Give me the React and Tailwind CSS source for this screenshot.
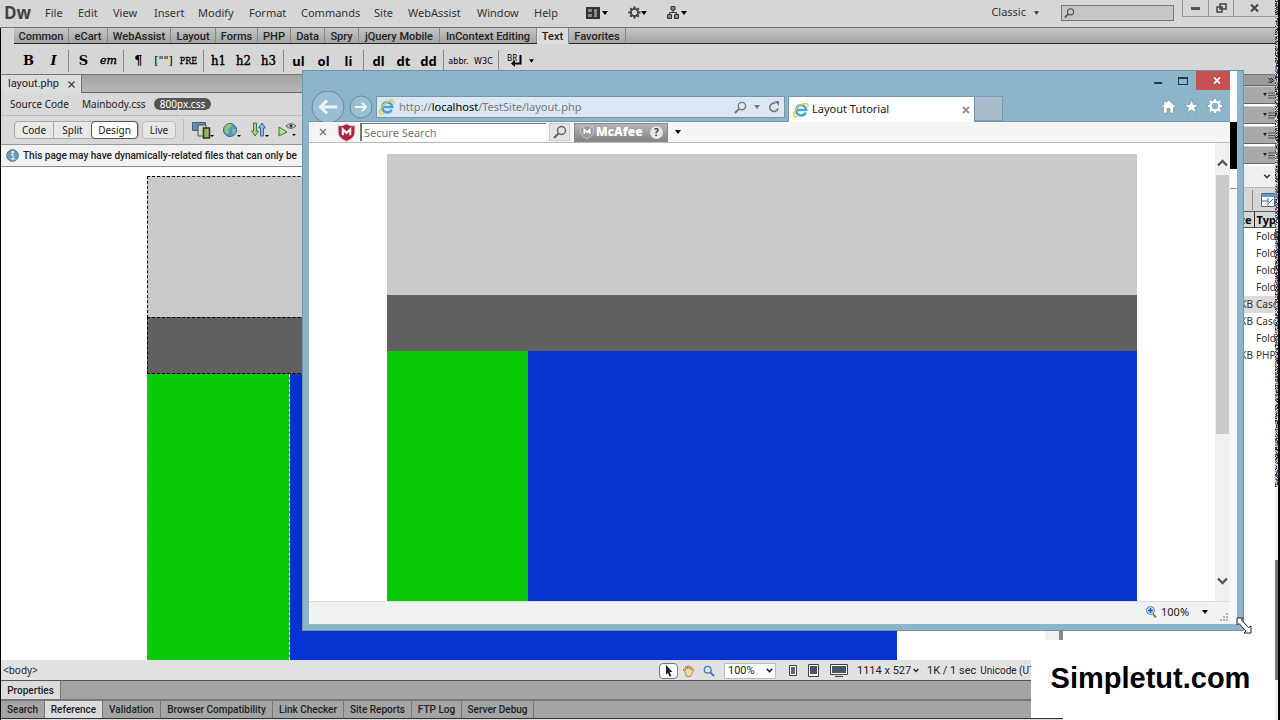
import React from 'react';

const menus = [
  { label: 'File', w: 'w-[33px]' },
  { label: 'Edit', w: 'w-[35px]' },
  { label: 'View', w: 'w-[41px]' },
  { label: 'Insert', w: 'w-[44px]' },
  { label: 'Modify', w: 'w-[51px]' },
  { label: 'Format', w: 'w-[52px]' },
  { label: 'Commands', w: 'w-[73px]' },
  { label: 'Site', w: 'w-[34px]' },
  { label: 'WebAssist', w: 'w-[69px]' },
  { label: 'Window', w: 'w-[57px]' },
  { label: 'Help', w: 'w-[40px]' },
];

const categories = [
  { label: 'Common', w: 'w-[55px]' },
  { label: 'eCart', w: 'w-[39px]' },
  { label: 'WebAssist', w: 'w-[63px]' },
  { label: 'Layout', w: 'w-[45px]' },
  { label: 'Forms', w: 'w-[42px]' },
  { label: 'PHP', w: 'w-[33px]' },
  { label: 'Data', w: 'w-[34px]' },
  { label: 'Spry', w: 'w-[34px]' },
  { label: 'jQuery Mobile', w: 'w-[81px]' },
  { label: 'InContext Editing', w: 'w-[97px]' },
  { label: 'Text', w: 'w-[32px]', active: true },
  { label: 'Favorites', w: 'w-[57px]' },
];

const serif = "font-['DejaVu_Serif',serif] font-bold text-[13px]";
const heading = "font-['DejaVu_Serif_Condensed','DejaVu_Serif',serif] font-medium text-[13px] [-webkit-text-stroke:0.4px_black]";
const sans = "font-['Noto_Sans',sans-serif] font-bold text-[13px]";
const tiny = "font-['DejaVu_Sans_Condensed',sans-serif] text-[9px]";

const insertGroups = [
  [{ label: 'B', style: serif }, { label: 'I', style: serif + ' italic' }],
  [{ label: 'S', style: serif }, { label: 'em', style: "font-['DejaVu_Serif',serif] italic text-[11px] [-webkit-text-stroke:0.4px_black]" }],
  [{ label: '¶', style: serif }, { label: '[""]', style: "font-['DejaVu_Serif',serif] text-[11px]" }, { label: 'PRE', style: "font-['DejaVu_Serif_Condensed','DejaVu_Serif',serif] text-[9px] [-webkit-text-stroke:0.3px_black]" }],
  [{ label: 'h1', style: heading }, { label: 'h2', style: heading }, { label: 'h3', style: heading }],
  [{ label: 'ul', style: sans }, { label: 'ol', style: sans }, { label: 'li', style: sans }],
  [{ label: 'dl', style: sans }, { label: 'dt', style: sans }, { label: 'dd', style: sans }],
  [{ label: 'abbr.', style: tiny }, { label: 'W3C', style: tiny }],
];

const bottomTabs = [
  { label: 'Search', w: 'w-11' },
  { label: 'Reference', w: 'w-[58px]', active: true },
  { label: 'Validation', w: 'w-[58px]' },
  { label: 'Browser Compatibility', w: 'w-28' },
  { label: 'Link Checker', w: 'w-[71px]' },
  { label: 'Site Reports', w: 'w-[68px]' },
  { label: 'FTP Log', w: 'w-[50px]' },
  { label: 'Server Debug', w: 'w-[72px]' },
];

const files = [
  { size: '', type: 'Folder' },
  { size: '', type: 'Folder' },
  { size: '', type: 'Folder' },
  { size: '', type: 'Folder' },
  { size: '1KB', type: 'Cascading', selected: true },
  { size: '1KB', type: 'Cascading' },
  { size: '', type: 'Folder' },
  { size: '1KB', type: 'PHP' },
];

const Caret = ({ className = '' }) => (
  <svg width="6" height="4" viewBox="0 0 6 4" className={`shrink-0 ${className}`}>
    <path d="M0 0h6L3 4z" fill="currentColor" />
  </svg>
);

const Chevron = ({ className = '' }) => (
  <svg width="7" height="5" viewBox="0 0 7 5" className={`shrink-0 ${className}`}>
    <path d="M.7.7l2.8 3 2.8-3" fill="none" stroke="currentColor" strokeWidth="1.6" />
  </svg>
);

const Gear = ({ size, fill, stroke = 'none' }) => (
  <svg width={size} height={size} viewBox="0 0 16 16">
    <g fill={fill} stroke={stroke} strokeWidth=".5">
      {[0, 45, 90, 135, 180, 225, 270, 315].map((a) => (
        <rect key={a} x="6.7" y="0.5" width="2.6" height="4" transform={`rotate(${a} 8 8)`} />
      ))}
    </g>
    <circle cx="8" cy="8" r="4.4" fill="none" stroke={fill} strokeWidth="2.2" />
  </svg>
);

const Magnifier = ({ size = 14, color = '#555', flip = false, fill = 'none' }) => (
  <svg width={size} height={size} viewBox="0 0 14 14" className={flip ? '-scale-x-100' : ''}>
    <path d="M8.5 8.5L13 13" stroke={color} strokeWidth="2.2" />
    <circle cx="5.5" cy="5.5" r="4" fill={fill} stroke={color} strokeWidth="1.5" />
  </svg>
);

const IeLogo = () => (
  <svg width="16" height="16" viewBox="0 0 16 16" className="shrink-0">
    <path d="M12.8 10.6A5.1 5.1 0 1 1 13.3 8H4.5" fill="none" stroke="#4aa5df" strokeWidth="2.6" />
    <path d="M14.8 4.6C15.4 1.5 13 .4 8.6 2.7 3.4 5.5.2 11.2 1.1 14c.5 1.3 2.2 1 3.7.2" fill="none" stroke="#e5cd2e" strokeWidth="1.5" />
  </svg>
);

const Grip = ({ className }) => (
  <div className={`w-[5px] shrink-0 bg-[radial-gradient(#888_35%,transparent_40%)] bg-[length:2px_2px] ${className}`} />
);

const MenuBar = () => (
  <header className="flex h-7 shrink-0 items-center border-b border-[#777] bg-[#d6d6d6] pb-0.5 text-[11px] text-[#333]">
    <span className="w-[45px] pl-1 font-['Open_Sans',sans-serif] text-[17px] leading-6 font-bold text-[#444]">Dw</span>
    <nav className="flex">
      {menus.map((m) => (
        <button key={m.label} className={`text-left leading-6 ${m.w}`}>{m.label}</button>
      ))}
    </nav>
    <div className="ml-3 flex items-center gap-5 text-black">
      <button className="flex items-center gap-0.5" aria-label="Layout">
        <svg width="14" height="12" viewBox="0 0 14 12">
          <path fill="#333" d="M0 0h14v12H0z" />
          <path fill="#8a8a8a" d="M2 2h4v3H2zM2 7h4v3H2zM8 2h3v8H8z" />
        </svg>
        <Caret />
      </button>
      <button className="flex items-center" aria-label="Extend"><Gear size={13} fill="#444" /><Caret /></button>
      <button className="flex items-center gap-0.5" aria-label="Site">
        <svg width="12" height="13" viewBox="0 0 12 13" fill="#888" stroke="#333">
          <path d="M4 .5h4v3.500H4zM.5 8.500h4v4h-4zM7.500 8.500h4v4h-4z" />
          <path d="M6 4v2.500M2.500 8.500v-2h7v2" fill="none" />
        </svg>
        <Caret />
      </button>
    </div>
    <button className="mr-[22px] ml-auto flex items-center gap-2"><span>Classic</span><Caret className="w-[5px]" /></button>
    <label className="flex h-4 w-[113px] items-center border border-[#777] bg-[#c6c6c6] pl-0.5">
      <Magnifier size={12} flip />
      <input aria-label="Search help" className="w-full min-w-0 bg-transparent outline-none" />
    </label>
    <div className="mb-2 ml-2 flex h-[17px] w-[93px] items-center border-b border-l border-[#999] text-[#444]">
      <button aria-label="Minimize" className="flex h-full w-[26px] items-center justify-center border-r border-[#999]"><span className="h-[3px] w-[9px] bg-[#555]" /></button>
      <button aria-label="Restore" className="flex h-full w-[25px] items-center justify-center border-r border-[#999]">
        <svg width="11" height="10" viewBox="0 0 11 10" fill="none" stroke="#444" strokeWidth="1.5"><path d="M4 1h6v5H4zM1 4h5v5H1z" /></svg>
      </button>
      <button aria-label="Close" className="flex h-full flex-1 items-center justify-center">
        <svg width="9" height="8" viewBox="0 0 9 8"><path d="M1 .5l7 7M8 .5l-7 7" stroke="#444" strokeWidth="2" /></svg>
      </button>
    </div>
  </header>
);

const InsertBar = () => (
  <section className="flex h-[47px] shrink-0 border-b border-[#777] bg-[#d6d6d6]">
    <div className="flex w-[13px] justify-center"><Grip className="mt-3 h-5" /></div>
    <div className="flex flex-1 flex-col">
      <div className="flex h-4 border-b border-[#222] bg-linear-to-b from-[#c4c4c4] to-[#a4a4a4] font-['Roboto',sans-serif] font-medium text-[#222]">
        {categories.map((c) => (
          <button key={c.label} className={`border-r border-[#888] text-center text-[11px] leading-[18px] whitespace-nowrap ${c.w} ${c.active ? '-mb-px bg-[#dcdcdc]' : ''}`}>
            {c.label}
          </button>
        ))}
      </div>
      <div className="flex flex-1 items-center pt-[3px] pl-0.5 text-black">
        {insertGroups.map((group, i) => (
          <div key={i} className="flex items-center">
            {group.map((b) => (
              <button key={b.label} className={`w-[25px] text-center leading-6 ${b.style}`}>{b.label}</button>
            ))}
            <span className="mx-0.5 h-[22px] w-px bg-[#888]" />
          </div>
        ))}
        <button aria-label="Line break" className="ml-1.5 flex items-center gap-1.5">
          <svg width="16" height="15" viewBox="0 0 16 15" fill="none" stroke="#000">
            <text x="0" y="8" fontSize="8" fill="#000" stroke="none">BR</text>
            <path d="M13.500 2v8.500H6" strokeWidth="2" /><path d="M8 7v7l-4-3.500z" fill="#000" stroke="none" />
          </svg>
          <Caret className="w-[5px]" />
        </button>
      </div>
    </div>
  </section>
);

const DocumentHeader = () => (
  <>
    <div className="flex h-[18px] shrink-0 border-b border-[#666] bg-linear-to-b from-[#a2a2a2] to-[#b8b8b8]">
      <div className="-mb-px flex w-[81px] items-center justify-between border-r border-[#777] bg-[#dcdcdc] pr-1.5 pl-[7px] text-[11px] leading-4">
        <span className="font-['Roboto',sans-serif]">layout.php</span>
        <button aria-label="Close layout.php">
          <svg width="7" height="7" viewBox="0 0 7 7"><path d="M.5.5l6 6M6.500.5l-6 6" stroke="#444" strokeWidth="1.300" /></svg>
        </button>
      </div>
    </div>
    <div className="flex h-[23px] shrink-0 items-center border-b border-[#bbb] bg-[#d8d8d8] pl-[9px] text-[10px]">
      <a href="#source" className="w-[72px]">Source Code</a>
      <a href="#mainbody" className="w-[72px]">Mainbody.css</a>
      <a href="#800px" className="w-[57px] rounded-full bg-[#555] text-center leading-3 text-white">800px.css</a>
    </div>
    <div className="flex h-[29px] shrink-0 items-center border-b border-[#999] bg-[#d8d8d8] pl-1 text-[10px]">
      <Grip className="mr-1 h-[18px]" />
      <div className="flex h-[18px] rounded border border-[#aaa] bg-[#e8e8e8]">
        <button className="w-[39px] border-r border-[#aaa]">Code</button>
        <button className="w-[37px]">Split</button>
        <button className="-my-px w-[47px] rounded-sm border border-[#555] bg-white">Design</button>
      </div>
      <button className="ml-[3px] h-[18px] w-[34px] rounded border border-[#bbb] bg-[#e6e6e6]">Live</button>
      <span className="mr-2 ml-[7px] h-[22px] w-px bg-[#bbb]" />
      <div className="flex items-center gap-2">
        <button aria-label="Multiscreen">
          <svg width="22" height="17" viewBox="0 0 22 17">
            <path d="M.5.5h13v8H.5z" fill="#6a87ba" stroke="#496083" />
            <path d="M6 3h8v11H6z" fill="#cfd8c4" stroke="#4b5640" />
            <path d="M11.500 6h6v10h-6z" fill="#94b55d" stroke="#333" strokeWidth="1.500" />
            <path d="M18 13h4l-2 2z" />
          </svg>
        </button>
        <button aria-label="Preview">
          <svg width="20" height="17" viewBox="0 0 20 17">
            <circle cx="8" cy="8" r="6.500" fill="#4b9cd0" stroke="#2d6796" />
            <path d="M3 4c3-3 6-2 7-1L8 6 6 7l1 3-2 2C2 10 2 7 3 4zM10 7l4 0-1 4-2 1z" fill="#8fc56c" />
            <path d="M15 13h4l-2 2z" />
          </svg>
        </button>
        <button aria-label="File management">
          <svg width="20" height="17" viewBox="0 0 20 17">
            <path d="M3.500 1h3v8h2L5 14 1.500 9h2z" fill="#a9d08b" stroke="#3f7a34" />
            <path d="M10.500 14h3V6h2L12 1 8.500 6h2z" fill="#8fbbe0" stroke="#35689c" />
            <path d="M15 13h4l-2 2z" />
          </svg>
        </button>
        <button aria-label="Validate">
          <svg width="20" height="17" viewBox="0 0 20 17">
            <path d="M1 5l8 5-8 4z" fill="#b7dba0" stroke="#3f7a34" />
            <path d="M8 4c3-3 7-3 10 0-3 3-7 3-10 0z" fill="#ccc" stroke="#555" />
            <circle cx="13" cy="4" r="1.500" fill="#333" /><path d="M14 12h4l-2 2z" />
          </svg>
        </button>
      </div>
    </div>
    <div className="flex h-[22px] shrink-0 items-center gap-1 border-b border-[#888] bg-[#f2f2f2] pl-[5px] font-['Roboto',sans-serif] text-[10px] font-medium whitespace-nowrap text-[#222]">
      <svg width="13" height="13" viewBox="0 0 13 13">
        <circle cx="6.500" cy="6.500" r="5.800" fill="#6f9cbd" stroke="#4b7390" />
        <path d="M5 5.500h2V10M5 10h4M6 2.500h1.500V4H6z" stroke="#fff" fill="none" />
      </svg>
      This page may have dynamically-related files that can only be
    </div>
  </>
);

const DesignView = () => (
  <div className="flex min-h-0 flex-1 overflow-hidden bg-white">
    <div className="mt-[9px] ml-[146px] flex w-[750px] flex-col">
      <div className="h-[142px] border border-dashed border-black bg-[#cacaca]" />
      <div className="-mt-px h-[57px] border border-dashed border-black bg-[#606060]" />
      <div className="flex flex-1">
        <div className="w-[143px] border-r border-l border-dashed border-r-white border-l-[#7a9a2a] bg-[#09c909]" />
        <div className="flex-1 border-t border-[#203a9a] bg-[#0433cf]" />
      </div>
    </div>
    <div className="ml-auto w-[18px] border-r-4 border-[#888] bg-[#f0f0f0]" />
  </div>
);

const StatusBar = () => (
  <footer className="flex h-5 shrink-0 items-center border-t border-[#ddd] bg-[#e2e2e2] text-[11px] whitespace-nowrap text-[#222]">
    <button className="pl-0.5 text-[10px]">&lt;body&gt;</button>
    <div className="ml-auto flex w-[404px] items-center font-['Roboto',sans-serif] leading-4">
      <button aria-label="Select tool" className="flex h-4 w-[19px] items-center justify-center rounded-sm border border-[#777] bg-white">
        <svg width="8" height="12" viewBox="0 0 8 12"><path d="M1 0l6.500 7H4.700l1.700 4-1.700.8L3 7.800 1 9.800z" fill="#222" /></svg>
      </button>
      <button aria-label="Hand tool" className="ml-1">
        <svg width="13" height="12" viewBox="0 0 13 12"><path d="M3 7L1 5l1-1 2 1.500L3 2l1-.5L5.500 4V1h1.300l.4 3L8.500 1.500l1 .5-.5 3 2-1.500.8.8L10 9l-1.500 2.500h-4z" fill="#f3d6a5" stroke="#a97f42" strokeWidth=".9" /></svg>
      </button>
      <button aria-label="Zoom tool" className="ml-2"><Magnifier size={12} color="#5272b8" fill="#dde8f8" /></button>
      <select aria-label="Magnification" className="ml-[9px] h-4 w-[52px] shrink-0 appearance-none border border-[#bbb] bg-white pl-[3px] leading-3" defaultValue="100%">
        <option>100%</option>
      </select>
      <Chevron className="-ml-[10px]" />
      <svg width="62" height="15" viewBox="0 0 62 15" className="ml-3.5 shrink-0" stroke="#444">
        <path d="M3.500 3.500h5v8h-5z" fill="#666" stroke="#fff" /><path d="M2.500 2.500h7v10h-7z" fill="none" />
        <path d="M21.500 1.500h10v12h-10z" fill="#fff" /><path d="M23 3h7v8h-7z" fill="#46546b" stroke="none" />
        <path d="M43.500 1.500h17v10h-17z" fill="#fff" /><path d="M45 3h14v7H45z" fill="#46546b" stroke="none" /><path d="M48 13.500h8" />
      </svg>
      <span className="ml-2 w-14 shrink-0">1114 x 527</span>
      <Chevron className="mr-2 w-1.5" />
      <span className="mr-1 shrink-0">1K / 1 sec</span>
      <span className="text-[10px]">Unicode (UTF-8)</span>
    </div>
  </footer>
);

const BottomPanels = () => (
  <section className="shrink-0 font-['Roboto',sans-serif] font-medium text-[#222]">
    <div className="flex h-[19px] border-t border-[#555] bg-[#a4a4a4]">
      <button className="w-[60px] border-r border-[#777] bg-[#dcdcdc] text-[10px]">Properties</button>
    </div>
    <div className="flex h-[19px] border-t-2 border-[#777] bg-[#a4a4a4] text-[10px]">
      {bottomTabs.map((t) => (
        <button key={t.label} className={`border-r border-[#777] whitespace-nowrap ${t.w} ${t.active ? 'bg-[#dcdcdc]' : ''}`}>{t.label}</button>
      ))}
    </div>
    <div className="h-0.5 border-t border-[#333] bg-[#ddd]" />
  </section>
);

const SidePanels = () => (
  <aside className="flex w-[212px] shrink-0 flex-col overflow-hidden bg-white text-[10px] text-[#333]">
    <div className="flex h-[11px] items-center justify-end border-b border-[#666] bg-[#9b9b9b] pr-px">
      <svg width="6" height="5" viewBox="0 0 6 5"><path d="M.5 0L3 2.500.5 5M3 0l2.500 2.500L3 5" fill="none" stroke="#000" /></svg>
    </div>
    {[0, 1, 2, 3].map((n) => (
      <div key={n} className="mb-0.5 flex h-[18px] items-center justify-end border-t border-b border-t-[#ccc] border-b-[#666] bg-[#a9a9a9]">
        <svg width="12" height="7" viewBox="0 0 12 7"><path d="M0 1h4L2 4z" fill="#222" /><path d="M5 1h7M5 3.500h7M5 6h7" stroke="#555" /></svg>
      </div>
    ))}
    <div className="flex h-[22px] items-center justify-end border-b border-[#bbb] bg-[#efefef] pr-1"><Chevron className="w-2" /></div>
    <div className="flex h-[23px] shrink-0 items-center justify-end bg-[#d6d6d6]">
      <span className="mr-2 h-5 w-px bg-[#888]" />
      <svg width="14" height="14" viewBox="0 0 14 14"><path d="M.5.5h13v13H.5z" fill="#fff" stroke="#567" /><path d="M1 1h13v3H1z" fill="#5e9bc8" /><path d="M7 5v8M1 8h6M8 10l4-4" stroke="#468" /></svg>
    </div>
    <table className="w-full table-fixed border-collapse whitespace-nowrap">
      <thead>
        <tr className="h-4 border-y border-[#555] bg-[#d6d6d6] text-[11px] leading-3 text-black">
          <th className="w-[191px] border-r border-[#333] p-0 pr-0.5 text-right">Size</th>
          <th className="overflow-hidden p-0 pl-0.5 text-left">Type</th>
        </tr>
      </thead>
      <tbody>
        {files.map((f, i) => (
          <tr key={i} className={`h-[17px] leading-3 ${f.selected ? 'bg-[#dadada]' : ''}`}>
            <td className="p-0 pr-px text-right">{f.size}</td>
            <td className="overflow-hidden p-0 pl-0.5">{f.type}</td>
          </tr>
        ))}
      </tbody>
    </table>
  </aside>
);

const noiseColors = ['#3b2f52', '#c9d8c4', '#6e86a8', '#1d1d24', '#a77fb5', '#e8e8ee', '#4f7a52', '#8c8ca0', '#283a6b', '#d4c39a', '#5b4a7c'];

// Screen capture static along the right edge
const EdgeStatic = () => (
  <div className="flex w-[5px] shrink-0 border-r-2 border-black bg-[#eee]">
    <div className="flex w-[3px] flex-col">
      <svg className="h-[487px] w-full shrink-0" shapeRendering="crispEdges">
        {Array.from({ length: 1461 }, (_, i) => (
          <rect key={i} x={i % 3} y={Math.floor(i / 3)} width="1" height="1" fill={noiseColors[Math.floor(Math.abs(Math.sin(i * 12.9898) * 43758.5453)) % 11]} />
        ))}
      </svg>
      <div className="mt-[73px] h-[120px] bg-[#777]" />
    </div>
  </div>
);

const Shield = ({ fill, letter, size = 18 }) => (
  <svg width={size} height={size} viewBox="0 0 18 18" className="shrink-0">
    <path d="M1 2.500C4 3 7 2 9 .7 11 2 14 3 17 2.500V9c0 4-4 7-8 8.500C5 16 1 13 1 9z" fill={fill} stroke="#d5d5d5" />
    <path d="M5.500 11.500V6L9 9.500 12.500 6v5.500" fill="none" stroke={letter} strokeWidth="2" />
  </svg>
);

const BrowserToolbar = () => (
  <>
    <div className="flex h-[25px] shrink-0 items-start">
      <div className="ml-auto flex h-[19px] items-center">
        <button aria-label="Minimize window" className="mt-1 mr-4 h-0.5 w-2 bg-[#1f3d4c]" />
        <button aria-label="Maximize window" className="mr-2 h-2 w-2.5 border border-t-2 border-[#1f3d4c]" />
        <button aria-label="Close window" className="flex h-[19px] w-[34px] items-center justify-center bg-[#c75050] pl-2">
          <svg width="8" height="7" viewBox="0 0 8 7"><path d="M1 .3l6 6.400M7 .3L1 6.700" stroke="#fff" strokeWidth="1.700" /></svg>
        </button>
      </div>
    </div>
    <div className="flex h-[26px] shrink-0 items-end border-b border-[#7798a8] text-[11px]">
      <button aria-label="Back" className="-mb-1 ml-0.5 shrink-0">
        <svg width="34" height="34" viewBox="0 0 34 34"><circle cx="17" cy="16" r="16" fill="#98bfd2" stroke="#668a9c" /><path d="M26 16H10M16 9.500L9.500 16l6.500 6.500" fill="none" stroke="#edf5f9" strokeWidth="3" /></svg>
      </button>
      <button aria-label="Forward" className="mb-0.5 ml-1 shrink-0">
        <svg width="24" height="24" viewBox="0 0 24 24"><circle cx="12" cy="12" r="11" fill="#98bfd2" stroke="#668a9c" /><path d="M6 12h11M13 8l4 4-4 4" fill="none" stroke="#edf5f9" strokeWidth="2" /></svg>
      </button>
      <div className="mb-[3px] ml-[3px] flex h-[22px] w-[409px] items-center border border-[#7596a6] bg-[#dbe8f3] pr-1 pl-0.5 text-[#777]">
        <IeLogo />
        <span className="ml-1">http://<span className="text-black">localhost</span>/TestSite/layout.php</span>
        <button aria-label="Search" className="mr-[7px] ml-auto"><Magnifier size={13} color="#777" flip /></button>
        <Caret className="mr-2" />
        <button aria-label="Refresh">
          <svg width="12" height="12" viewBox="0 0 12 12"><path d="M10 7.500A4.200 4.200 0 1 1 7.500 2.300" fill="none" stroke="#777" strokeWidth="1.700" /><path d="M6.500 0H11v5z" fill="#777" /></svg>
        </button>
      </div>
      <div className="-mb-px ml-[3px] flex h-[26px] w-[187px] items-center gap-[3px] border border-b-0 border-[#7596a6] bg-white pr-1 pl-1 text-[#222]">
        <IeLogo />
        <span>Layout Tutorial</span>
        <button aria-label="Close tab" className="ml-auto">
          <svg width="8" height="8" viewBox="0 0 8 8"><path d="M1 1l6 6M7 1L1 7" stroke="#999" strokeWidth="2" /></svg>
        </button>
      </div>
      <button aria-label="New tab" className="h-[25px] w-7 border border-l-0 border-[#7e9aae] bg-[#a9bccd]" />
      <div className="mr-[7px] mb-[7px] ml-auto flex items-center gap-2">
        <button aria-label="Home">
          <svg width="15" height="15" viewBox="0 0 15 15"><path d="M7.500 1l6.800 6.500-1 1L12.500 8v6H9V9.500H6V14H2.500V8l-.8.5-1-1L3 5.200V2h2v1.400z" fill="#fff" stroke="#6b8896" strokeWidth=".6" /></svg>
        </button>
        <button aria-label="Favorites">
          <svg width="15" height="15" viewBox="0 0 15 15"><path d="M7.500.5l1.900 4.900 5.100.2-4 3.200 1.400 5-4.400-2.900-4.400 2.900 1.400-5-4-3.200 5.100-.2z" fill="#fff" stroke="#6b8896" strokeWidth=".6" /></svg>
        </button>
        <button aria-label="Tools"><Gear size={16} fill="#fff" stroke="#6b8896" /></button>
      </div>
    </div>
    <div className="flex h-[21px] shrink-0 items-center border-b border-[#bbb] bg-[#f5f5f6] text-[11px]">
      <button aria-label="Close toolbar" className="ml-2.5">
        <svg width="8" height="8" viewBox="0 0 8 8"><path d="M1 1l6 6M7 1L1 7" stroke="#777" strokeWidth="1.400" /></svg>
      </button>
      <div className="ml-2.5"><Shield fill="#b5203c" letter="#fff" size={19} /></div>
      <input aria-label="Secure Search" placeholder="Secure Search" className="ml-1 h-[18px] w-[186px] border-t border-l-2 border-[#777] bg-white pb-px pl-0.5 outline-none placeholder:text-[#777]" />
      <button aria-label="Run search" className="ml-[3px] flex h-[18px] w-[21px] items-center justify-center border border-[#ccc] bg-[#e4e4e4]"><Magnifier size={14} color="#666" flip /></button>
      <div className="ml-1 flex h-[19px] w-[94px] items-center border border-[#888] bg-linear-to-b from-[#b5b5b5] to-[#858585] pr-1 pl-[5px]">
        <Shield fill="#999" letter="#fff" size={14} />
        <span className="ml-0.5 font-['Open_Sans',sans-serif] text-[12px] leading-4 font-extrabold text-white">McAfee</span>
        <button aria-label="Help" className="ml-auto h-[13px] w-[13px] rounded-full bg-[#e5e5e5] text-center text-[10px] leading-[13px] font-bold text-[#444]">?</button>
      </div>
      <button aria-label="Toolbar menu" className="ml-[7px]"><Caret /></button>
    </div>
  </>
);

const BrowserWindow = () => (
  <div className="absolute top-[70px] right-9 bottom-[89px] left-[302px] flex border border-[#6d94a7] bg-[#8db5ca] pr-1.5 pb-1.5 pl-1.5">
    <div className="flex min-w-0 flex-1 flex-col">
      <BrowserToolbar />
      <div className="flex min-h-0 flex-1 bg-white">
        <div className="mx-auto mt-[11px] flex w-[750px] flex-col">
          <div className="h-[141px] bg-[#cacaca]" />
          <div className="h-14 bg-[#606060]" />
          <div className="flex flex-1">
            <div className="w-[141px] bg-[#09c909]" />
            <div className="flex-1 bg-[#0433cf]" />
          </div>
        </div>
        <div className="flex w-[15px] flex-col items-center bg-[#f0f0f0] text-[#555]">
          <svg width="11" height="8" viewBox="0 0 11 8" className="mt-4 mb-2 shrink-0"><path d="M1 6.500l4.500-4.500L10 6.500" fill="none" stroke="currentColor" strokeWidth="2.400" /></svg>
          <div className="min-h-0 w-[13px] flex-[259] bg-[#cacaca]" />
          <div className="flex-[143]" />
          <svg width="11" height="8" viewBox="0 0 11 8" className="mb-4 shrink-0"><path d="M1 1.500L5.500 6 10 1.500" fill="none" stroke="currentColor" strokeWidth="2.400" /></svg>
        </div>
      </div>
      <div className="flex h-[23px] shrink-0 items-center justify-end border-t border-[#ddd] bg-[#f0f1f2] pb-0.5 text-[11px] leading-5 text-[#222]">
        <svg width="11" height="12" viewBox="0 0 11 12"><path d="M7 8l3 3.500" stroke="#a77b4a" strokeWidth="2" /><circle cx="4.500" cy="4.500" r="4" fill="#cfe3f6" stroke="#4c83b8" /><path d="M4.500 2v5M2 4.500h5" stroke="#225c9c" strokeWidth="1.500" /></svg>
        <span className="ml-1 w-[41px]">100%</span>
        <Caret className="text-black" />
        <svg width="8" height="8" viewBox="0 0 8 8" className="mt-2.5 mr-0.5 ml-3" fill="#b5b5b5"><path d="M6 0h2v2H6zM3 3h2v2H3zM6 3h2v2H6zM0 6h2v2H0zM3 6h2v2H3zM6 6h2v2H6z" /></svg>
      </div>
    </div>
    <div className="flex w-[7px] shrink-0 flex-col bg-[#f4f6f8]">
      <div className="h-[51px] bg-white" />
      <div className="h-[47px] bg-black" />
      <div className="h-5 border-b border-[#999] bg-white" />
    </div>
  </div>
);

const App = () => {
  return (
    <div className="relative flex h-screen overflow-hidden bg-white font-['Noto_Sans','Liberation_Sans',sans-serif]">
      <div className="flex min-w-0 flex-1 flex-col">
        <MenuBar />
        <div className="flex min-h-0 flex-1 flex-col border-l border-black">
          <InsertBar />
          <div className="flex min-h-0 flex-1">
            <main className="flex min-w-0 flex-1 flex-col text-[#222]">
              <DocumentHeader />
              <DesignView />
              <StatusBar />
              <BottomPanels />
            </main>
            <SidePanels />
          </div>
        </div>
      </div>
      <EdgeStatic />
      <BrowserWindow />
      <div className="absolute right-2.5 bottom-0.5 flex h-[78px] w-[239px] items-center justify-center bg-white font-['Liberation_Sans',sans-serif] text-[29px] font-bold text-black">
        Simpletut.com
      </div>
      {/* Resize cursor */}
      <svg width="18" height="18" viewBox="0 0 18 18" className="absolute top-[617px] right-[26px]">
        <path d="M1 1h6L5.500 3l7 7.500L15 9v7H8l2-2L3 6.500 1 8z" fill="#fff" stroke="#222" />
      </svg>
    </div>
  );
};

export default App;
